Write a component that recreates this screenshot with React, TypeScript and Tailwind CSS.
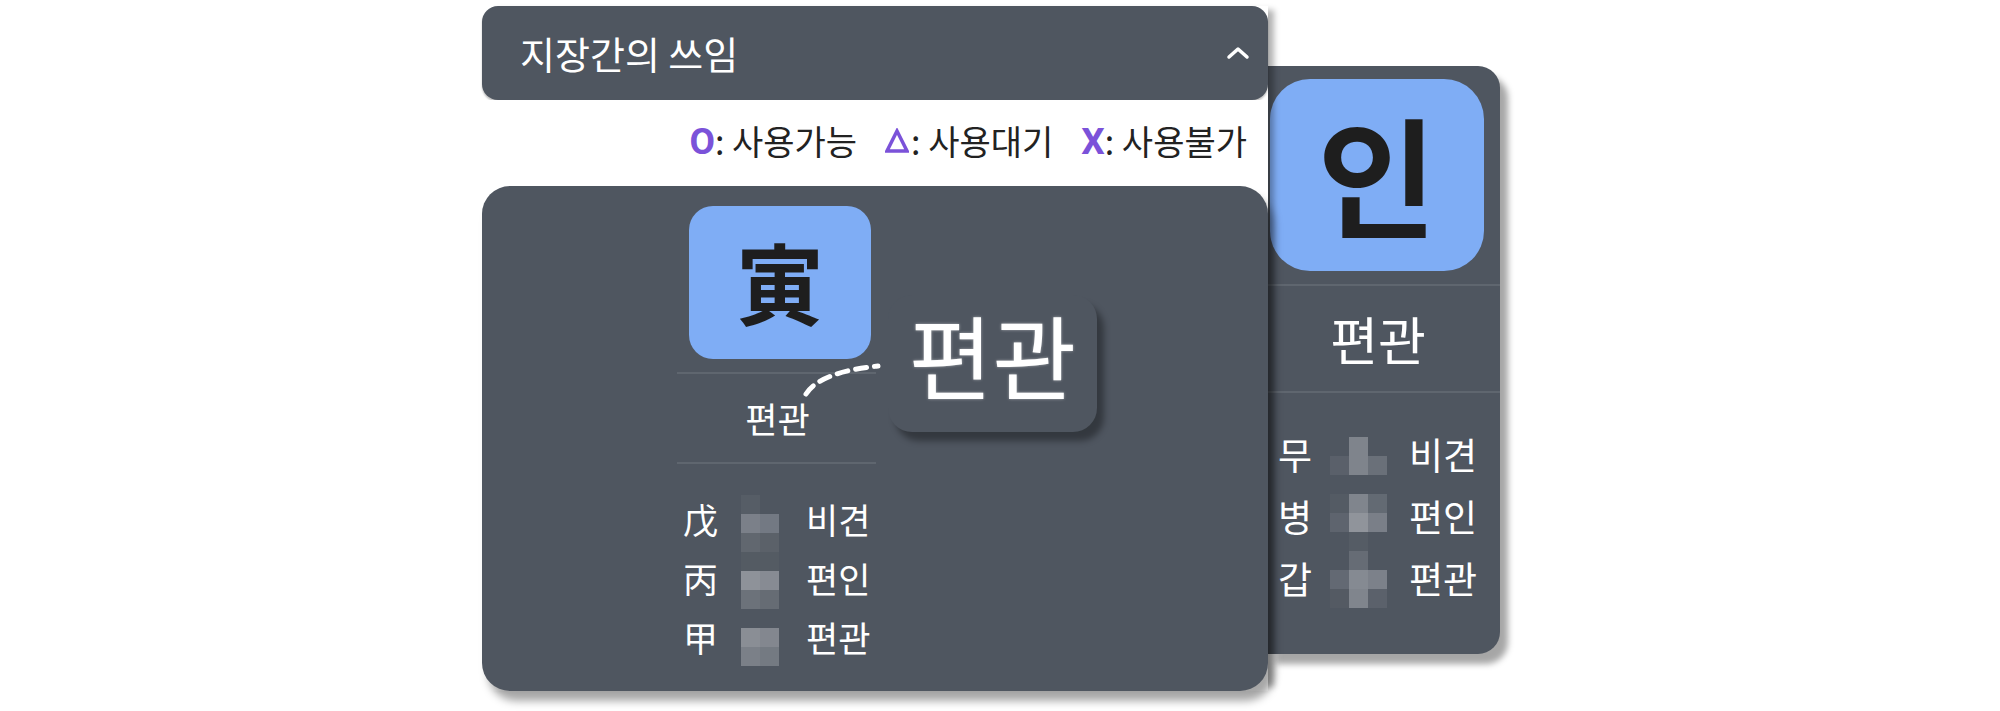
import React from "react";

type Cell = string | null;

const mainMosaic: Cell[][] = [
  ["#565d66", null],
  ["#7b8089", "#737983"],
  ["#61676f", "#5b6169"],
  ["#545b63", "#545b63"],
  ["#8e9299", "#878b93"],
  ["#6c727a", "#666c74"],
  [null, null],
  ["#8a8e95", "#83878f"],
  ["#7b8088", "#747a82"],
];

const sideMosaic: Cell[][] = [
  [null, "#7f848c", null],
  ["#5a606a", "#7f848c", "#6a7079"],
  [null, null, null],
  ["#545b64", "#80858d", "#636a73"],
  ["#5e646e", "#90949b", "#7a7f88"],
  [null, "#555c65", null],
  [null, "#666c75", null],
  ["#636973", "#858a92", "#7c818a"],
  ["#545a63", "#80858d", "#5b616b"],
];

function Mosaic({ cells }: { cells: Cell[][] }) {
  return (
    <div className="flex flex-col">
      {cells.map((row, i) => (
        <div key={i} className="flex">
          {row.map((c, j) => (
            <div key={j} className="w-[19px] h-[19px]" style={{ backgroundColor: c ?? "transparent" }} />
          ))}
        </div>
      ))}
    </div>
  );
}

export default function App() {
  return (
    <div className="w-[2000px] h-[711px] bg-white overflow-hidden font-['Noto_Sans_CJK_KR','Noto_Sans',sans-serif]">
      <div className="flex pl-[482px] pt-[6px]">
        {/* left column */}
        <div className="relative z-10 w-[786px] flex flex-col shadow-[10px_0_6px_-4px_rgba(0,0,0,0.3)]">
          {/* header */}
          <div className="h-[94px] bg-[#4f5660] rounded-[16px] flex items-center justify-between pl-[38px] pr-[16px] shadow-[0_2px_2px_rgba(0,0,0,0.25)]">
            <span className="text-white text-[38px] leading-none font-normal">지장간의 쓰임</span>
            <svg width="24" height="14" viewBox="0 0 24 14" className="mr-[2px]">
              <polyline points="3,11 12,3 21,11" fill="none" stroke="white" strokeWidth="3.5" strokeLinecap="round" strokeLinejoin="round" />
            </svg>
          </div>
          {/* legend */}
          <div className="h-[86px] bg-white flex items-center justify-end pr-[21px] pb-[4px] text-[34px] leading-none text-[#222222]">
            <span className="font-bold text-[#7b52d9] font-['Roboto',sans-serif] text-[37px]">O</span>
            <span>: 사용가능</span>
            <svg width="24" height="26" viewBox="0 0 24 26" className="ml-[28px] mr-[2px]">
              <polygon points="12,3 22,23 2,23" fill="none" stroke="#7b52d9" strokeWidth="3.5" strokeLinejoin="miter" />
            </svg>
            <span>: 사용대기</span>
            <span className="ml-[28px] font-bold text-[#7b52d9] font-['Roboto',sans-serif] text-[37px]">X</span>
            <span>: 사용불가</span>
          </div>
          {/* main card */}
          <div className="relative h-[505px] bg-[#4f5660] rounded-[28px] shadow-[6px_10px_8px_rgba(0,0,0,0.35)]">
            <div className="ml-[195px] w-[199px] pt-[20px] flex flex-col">
              <div className="ml-[12px] w-[182px] h-[153px] bg-[#7fadf5] rounded-[24px] flex items-center justify-center">
                <span className="text-[88px] leading-none font-bold text-[#1e1e1e] -mt-[6px]">寅</span>
              </div>
              <div className="mt-[13px] h-[2px] bg-[#5f666f]" />
              <div className="h-[88px] flex items-center justify-center pl-[2px] pb-[2px]">
                <span className="text-white text-[35px] leading-none">편관</span>
              </div>
              <div className="h-[2px] bg-[#5f666f]" />
              <div className="flex pt-[25px] text-white text-[35px]">
                <div className="ml-[6px] w-[40px] flex flex-col">
                  <div className="h-[59px] leading-[59px]">戊</div>
                  <div className="h-[59px] leading-[59px]">丙</div>
                  <div className="h-[59px] leading-[59px]">甲</div>
                </div>
                <div className="ml-[18px] mt-[6px]">
                  <Mosaic cells={mainMosaic} />
                </div>
                <div className="ml-[27px] flex flex-col">
                  <div className="h-[59px] leading-[59px]">비견</div>
                  <div className="h-[59px] leading-[59px]">편인</div>
                  <div className="h-[59px] leading-[59px]">편관</div>
                </div>
              </div>
            </div>
            {/* dashed connector */}
            <svg className="absolute left-0 top-0" width="786" height="505" viewBox="0 0 786 505">
              <path d="M324 208 Q 338 186 396 180" fill="none" stroke="white" strokeWidth="5" strokeDasharray="11 8" strokeLinecap="round" />
            </svg>
            {/* tooltip */}
            <div className="absolute left-[406px] top-[109px] w-[209px] h-[137px] bg-[#4f5660] rounded-[24px] shadow-[7px_9px_6px_rgba(0,0,0,0.35)] flex items-center justify-center">
              <span className="text-white text-[91px] leading-none -mt-[20px] [text-shadow:0_0_3px_rgba(255,255,255,0.5)]">편관</span>
            </div>
          </div>
        </div>
        {/* right card */}
        <div className="mt-[60px] w-[232px] h-[588px] bg-[#4f5660] rounded-r-[22px] shadow-[8px_10px_6px_rgba(0,0,0,0.35)] flex flex-col">
          <div className="mt-[13px] ml-[2px] w-[214px] h-[192px] bg-[#7fadf5] rounded-[40px] flex items-center justify-center">
            <span className="text-[130px] leading-none font-bold text-[#1e1e1e] -mt-[8px]">인</span>
          </div>
          <div className="mt-[13px] h-[2px] bg-[#5f666f]" />
          <div className="h-[105px] flex items-center justify-center pr-[12px]">
            <span className="text-white text-[52px] leading-none">편관</span>
          </div>
          <div className="h-[2px] bg-[#5f666f]" />
          <div className="flex pt-[30px] text-white text-[37px]">
            <div className="ml-[10px] w-[40px] flex flex-col">
              <div className="h-[62px] leading-[62px]">무</div>
              <div className="h-[62px] leading-[62px]">병</div>
              <div className="h-[62px] leading-[62px]">갑</div>
            </div>
            <div className="ml-[12px] mt-[14px]">
              <Mosaic cells={sideMosaic} />
            </div>
            <div className="ml-[22px] flex flex-col">
              <div className="h-[62px] leading-[62px]">비견</div>
              <div className="h-[62px] leading-[62px]">편인</div>
              <div className="h-[62px] leading-[62px]">편관</div>
            </div>
          </div>
        </div>
      </div>
    </div>
  );
}
